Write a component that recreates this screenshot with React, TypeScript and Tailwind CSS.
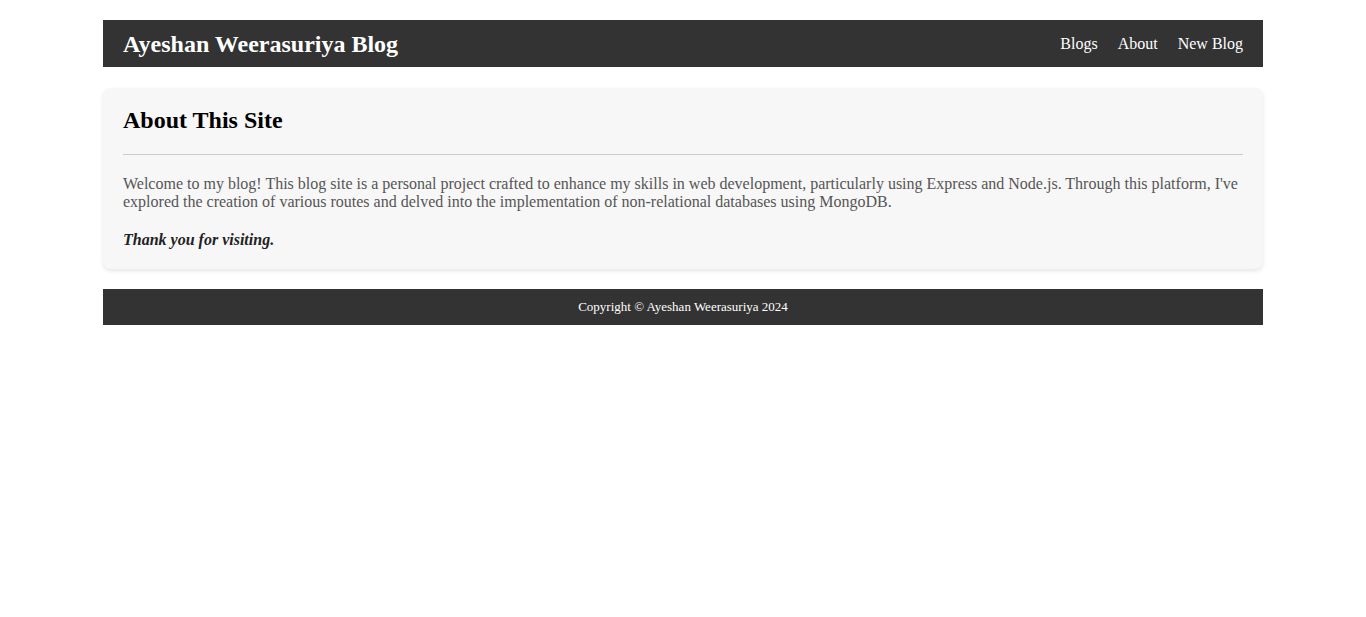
export default function App() {
  return (
    <div className="min-h-[617px] bg-white font-['Liberation_Serif','Times_New_Roman',serif]">
      <div className="mx-auto w-[1160px] pt-[20px]">
        <header className="flex h-[47px] items-center justify-between bg-[#333333] px-[20px] text-white">
          <h1 className="text-[24px] font-bold leading-none">Ayeshan Weerasuriya Blog</h1>
          <nav className="flex gap-[20px] text-[16px]">
            <a href="#">Blogs</a>
            <a href="#">About</a>
            <a href="#">New Blog</a>
          </nav>
        </header>
        <main className="mt-[21px] rounded-[8px] bg-[#f7f7f7] px-[20px] pt-[18px] pb-[20px] shadow-[0_2px_4px_rgba(0,0,0,0.1)]">
          <h2 className="text-[24px] font-bold leading-[28px] text-black">About This Site</h2>
          <hr className="mt-[20px] border-0 border-t border-[#cccccc]" />
          <p className="mt-[20px] text-[16px] leading-[18px] text-[#555555]">
            Welcome to my blog! This blog site is a personal project crafted to enhance my skills in web development, particularly using Express and Node.js. Through this platform, I've explored the creation of various routes and delved into the implementation of non-relational databases using MongoDB.
          </p>
          <p className="mt-[20px] text-[16px] leading-[18px] font-bold italic text-[#222222]">Thank you for visiting.</p>
        </main>
        <footer className="mt-[20px] flex h-[36px] items-center justify-center bg-[#333333] text-[13px] text-white">
          Copyright © Ayeshan Weerasuriya 2024
        </footer>
      </div>
    </div>
  );
}
